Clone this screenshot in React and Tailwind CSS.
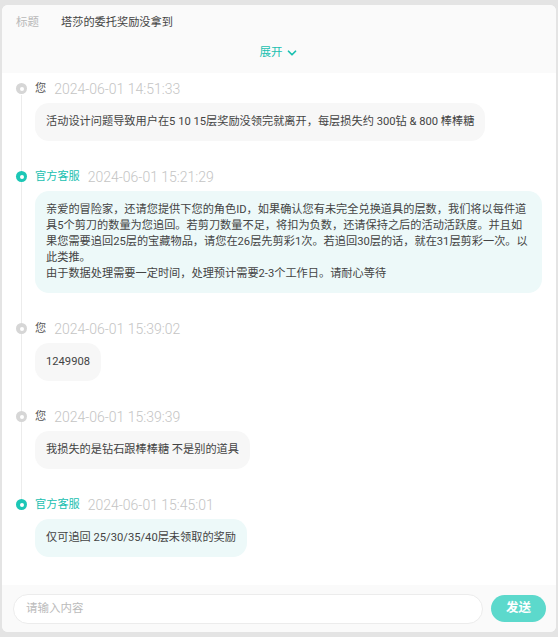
import React from 'react';
import { ChevronDown } from 'lucide-react';

const messages = [
  {
    from: 'user',
    name: '您',
    time: '2024-06-01 14:51:33',
    lines: ['活动设计问题导致用户在5 10 15层奖励没领完就离开，每层损失约 300钻 & 800 棒棒糖'],
  },
  {
    from: 'staff',
    name: '官方客服',
    time: '2024-06-01 15:21:29',
    wide: true,
    lines: [
      '亲爱的冒险家，还请您提供下您的角色ID，如果确认您有未完全兑换道具的层数，我们将以每件道',
      '具5个剪刀的数量为您追回。若剪刀数量不足，将扣为负数，还请保持之后的活动活跃度。并且如',
      '果您需要追回25层的宝藏物品，请您在26层先剪彩1次。若追回30层的话，就在31层剪彩一次。以',
      '此类推。',
      '由于数据处理需要一定时间，处理预计需要2-3个工作日。请耐心等待',
    ],
  },
  { from: 'user', name: '您', time: '2024-06-01 15:39:02', lines: ['1249908'] },
  { from: 'user', name: '您', time: '2024-06-01 15:39:39', lines: ['我损失的是钻石跟棒棒糖 不是别的道具'] },
  { from: 'staff', name: '官方客服', time: '2024-06-01 15:45:01', lines: ['仅可追回 25/30/35/40层未领取的奖励'] },
];

function Dot({ staff }) {
  return (
    <span
      className={`absolute left-[-19px] top-[2px] flex h-[11px] w-[11px] items-center justify-center rounded-full ${
        staff ? 'bg-[#1cc7b6]' : 'bg-[#d6d6d6]'
      }`}
    >
      <span className="h-[4px] w-[4px] rounded-full bg-white" />
    </span>
  );
}

export default function App() {
  return (
    <div
      className="h-[637px] w-[558px] bg-[#e4e4e4] px-[2px] pt-[5px] pb-[5px]"
      style={{ fontFamily: 'Roboto, "Noto Sans CJK SC", sans-serif' }}
    >
      <div className="flex h-full flex-col overflow-hidden rounded-[6px] bg-white">
        <div className="h-[68px] shrink-0 bg-[#fafafa] px-[14px] pt-[8px]">
          <div className="flex h-[20px] items-center">
            <span className="w-[45px] text-[11.5px] text-[#b8b8b8]">标题</span>
            <span className="text-[11.2px] text-[#444]">塔莎的委托奖励没拿到</span>
          </div>
          <div className="mt-[11px] flex items-center justify-center gap-[2px] text-[11.5px] text-[#19c0b0]">
            <span>展开</span>
            <ChevronDown size={14} strokeWidth={3} />
          </div>
        </div>

        <div className="relative flex-1 pl-[33px] pr-[14px] pt-[8px]">
          <div className="absolute left-[18.5px] top-[22px] h-[410px] w-px bg-[#ececec]" />
          <div className="flex flex-col gap-[28px]">
            {messages.map((m, i) => {
              const staff = m.from === 'staff';
              return (
                <div key={i} className="relative">
                  <Dot staff={staff} />
                  <div className="flex h-[16px] items-center gap-[8px]">
                    <span className={`text-[11.2px] ${staff ? 'text-[#19c0b0]' : 'text-[#555]'}`}>{m.name}</span>
                    <span className="text-[14px] font-light text-[#c4c4c4]">{m.time}</span>
                  </div>
                  <div
                    className={`mt-[6px] max-w-full rounded-[14px] px-[11px] py-[11px] text-[11.2px] leading-[16px] text-[#444] ${
                      m.wide ? 'block' : 'inline-block'
                    } ${staff ? 'bg-[#edf9f9]' : 'bg-[#f7f7f7]'}`}
                  >
                    {m.lines.map((l, j) => (
                      <div key={j} className="whitespace-nowrap">
                        {l}
                      </div>
                    ))}
                  </div>
                </div>
              );
            })}
          </div>
        </div>

        <div className="flex h-[47px] shrink-0 items-center gap-[8px] bg-[#fafafa] pl-[11px] pr-[10px]">
          <div className="flex h-[30px] flex-1 items-center rounded-full border border-[#ececec] bg-white px-[12px] text-[11.5px] text-[#bbb]">
            请输入内容
          </div>
          <button className="flex h-[27px] w-[55px] items-center justify-center rounded-full bg-[#5cd9cc] text-[12.5px] font-bold text-white">
            发送
          </button>
        </div>
      </div>
    </div>
  );
}
